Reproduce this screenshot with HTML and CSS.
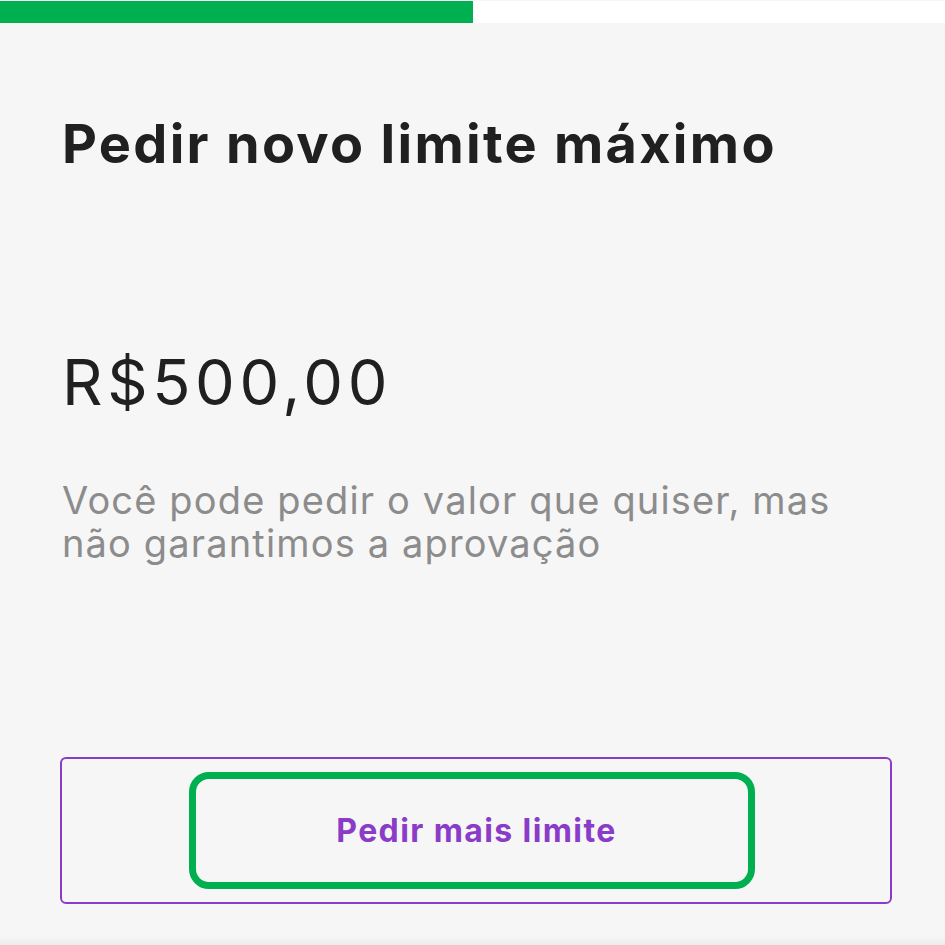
FILE: index.html
```html
<!DOCTYPE html>
<html lang="pt-BR">
<head>
<meta charset="utf-8">
<title>Pedir novo limite máximo</title>
<link rel="stylesheet" href="styles.css">
</head>
<body>
<div class="progress"><div class="progress-fill" style="width:50.05%"></div></div>
<main class="content">
  <h1 class="title">Pedir novo limite máximo</h1>
  <p class="amount">R$500,00</p>
  <p class="desc">Você pode pedir o valor que quiser, mas não garantimos a aprovação</p>
  <div class="action-box">
    <button class="action-btn">Pedir mais limite</button>
  </div>
</main>
</body>
</html>
```
FILE: styles.css
```css
html, body {
  margin: 0;
  padding: 0;
  background: #f6f6f6;
}
body {
  font-family: "Inter", "Lato", sans-serif;
  color: #202020;
  height: 945px;
  overflow: hidden;
  background: linear-gradient(#f6f6f6 0, #f6f6f6 936px, #ececec 945px);
}
.progress {
  margin-top: 1px;
  height: 22px;
  background: #ffffff;
  display: flex;
}
.progress-fill {
  background: #00b050;
  height: 100%;
}
.content {
  padding: 0 54px 0 62px;
}
.title {
  margin: 0;
  padding-top: 81px;
  font-size: 54px;
  line-height: 80px;
  font-weight: 700;
  letter-spacing: 2.3px;
  color: #202020;
}
.amount {
  margin: 0;
  padding-top: 158px;
  font-size: 63px;
  line-height: 80px;
  font-weight: 400;
  letter-spacing: 4.6px;
  color: #202020;
}
.desc {
  margin: 0;
  padding-top: 57px;
  max-width: 800px;
  font-size: 38px;
  line-height: 43px;
  letter-spacing: 1.15px;
  color: #8c8c8c;
}
.action-box {
  margin: 192px 0 0 -2px;
  width: 828px;
  height: 143px;
  border: 2px solid #8a3cc8;
  border-radius: 6px;
  display: flex;
  align-items: center;
  justify-content: center;
}
.action-btn {
  width: 566px;
  height: 117px;
  margin-right: 8px;
  border: 7px solid #00b050;
  border-radius: 20px;
  background: transparent;
  font-family: inherit;
  font-size: 32px;
  font-weight: 700;
  letter-spacing: 1.4px;
  color: #8a3cc8;
  padding: 0 0 0 9px;
}
```
